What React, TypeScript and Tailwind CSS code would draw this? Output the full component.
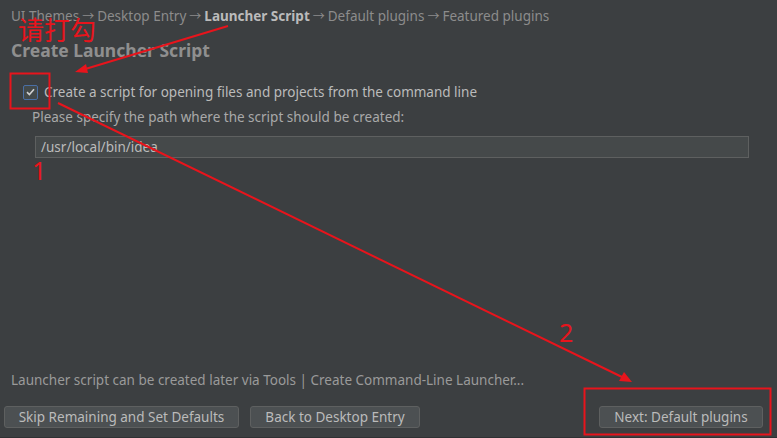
import React from 'react';

const font = { fontFamily: '"Noto Sans", "Noto Sans CJK SC", sans-serif' };

const Crumb: React.FC<{ label: string; active?: boolean; last?: boolean }> = ({ label, active, last }) => (
  <>
    <span className={active ? 'font-bold text-[#bbbbbb]' : 'text-[#8c8c8c]'}>{label}</span>
    {!last && <span className="px-[3px] text-[12px] text-[#8c8c8c]">→</span>}
  </>
);

const Button: React.FC<{ label: string; className?: string }> = ({ label, className }) => (
  <button
    className={`h-[22px] rounded-[3px] border border-[#5e6060] bg-[#4c5052] px-[13px] text-[13.5px] leading-[20px] text-[#bbbbbb] ${className ?? ''}`}
  >
    {label}
  </button>
);

const Annotations: React.FC = () => (
  <>
    <svg className="pointer-events-none absolute inset-0" width={777} height={438}>
      <rect x={10.5} y={73.5} width={39} height={35} fill="none" stroke="#e8141c" strokeWidth={2} />
      <rect x={584.5} y={388.5} width={186} height={46} fill="none" stroke="#e8141c" strokeWidth={2} />
      <line x1={228} y1={26} x2={82} y2={70} stroke="#e8141c" strokeWidth={2} />
      <polygon points="75,72 86,64 88,73" fill="#e8141c" />
      <line x1={58} y1={103} x2={622} y2={377} stroke="#e8141c" strokeWidth={2} />
      <polygon points="632,382 619,381 624,372" fill="#e8141c" />
    </svg>
    <div className="absolute left-[18px] top-[13px] text-[26px] leading-[34px] text-[#e8141c]">请打勾</div>
    <div className="absolute left-[32px] top-[156px] text-[25px] leading-[28px] text-[#e8141c]">1</div>
    <div className="absolute left-[559px] top-[318px] text-[25px] leading-[28px] text-[#e8141c]">2</div>
  </>
);

export default function App() {
  return (
    <div className="relative flex h-[438px] w-[777px] flex-col overflow-hidden bg-[#3c3f41] text-[13.5px] text-[#bbbbbb]" style={font}>
      <div className="flex h-[33px] items-center pl-[11px]">
        <Crumb label="UI Themes" />
        <Crumb label="Desktop Entry" />
        <Crumb label="Launcher Script" active />
        <Crumb label="Default plugins" />
        <Crumb label="Featured plugins" last />
      </div>
      <div className="pl-[11px] text-[17.5px] font-bold leading-[34px] text-[#8f8f8f]">Create Launcher Script</div>

      <div className="mt-[16px] flex items-center pl-[23px]">
        <span className="flex h-[15px] w-[15px] items-center justify-center rounded-[2px] border border-[#4a6fa5] bg-[#43494a]">
          <svg width="9" height="8" viewBox="0 0 9 8">
            <path d="M1 4.2 L3.4 6.5 L8 1.2" fill="none" stroke="#d0d0d0" strokeWidth={1.6} />
          </svg>
        </span>
        <span className="ml-[6px] leading-[18px]">Create a script for opening files and projects from the command line</span>
      </div>
      <div className="mt-[7px] pl-[32px] leading-[18px] text-[#a9a9a9]">Please specify the path where the script should be created:</div>
      <div className="ml-[35px] mt-[10px] flex h-[22px] w-[714px] items-center border border-[#5e6060] bg-[#45494a] pl-[5px] text-[#bbbbbb]">
        /usr/local/bin/idea
      </div>

      <div className="flex-1" />

      <div className="pl-[11px] leading-[18px] text-[#9a9a9a]">
        Launcher script can be created later via Tools | Create Command-Line Launcher...
      </div>
      <div className="mb-[9px] mt-[17px] flex items-center pl-[4px] pr-[14px]">
        <Button label="Skip Remaining and Set Defaults" className="w-[235px]" />
        <Button label="Back to Desktop Entry" className="ml-[11px] w-[170px]" />
        <div className="flex-1" />
        <Button label="Next: Default plugins" className="w-[164px]" />
      </div>
      <div className="h-[1px] bg-[#2f3133]" />

      <Annotations />
    </div>
  );
}
